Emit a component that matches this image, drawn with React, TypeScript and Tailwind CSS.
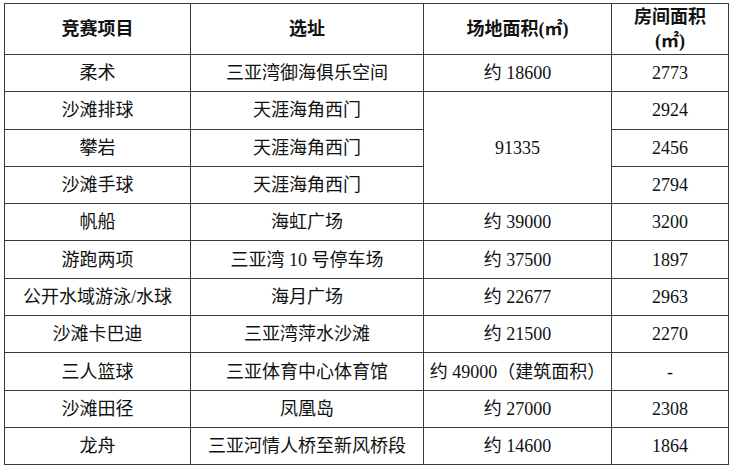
const rows: { name: string; site: string; area?: string; room: string }[] = [
  { name: '柔术', site: '三亚湾御海俱乐空间', area: '约 18600', room: '2773' },
  { name: '沙滩排球', site: '天涯海角西门', area: '91335', room: '2924' },
  { name: '攀岩', site: '天涯海角西门', room: '2456' },
  { name: '沙滩手球', site: '天涯海角西门', room: '2794' },
  { name: '帆船', site: '海虹广场', area: '约 39000', room: '3200' },
  { name: '游跑两项', site: '三亚湾 10 号停车场', area: '约 37500', room: '1897' },
  { name: '公开水域游泳/水球', site: '海月广场', area: '约 22677', room: '2963' },
  { name: '沙滩卡巴迪', site: '三亚湾萍水沙滩', area: '约 21500', room: '2270' },
  { name: '三人篮球', site: '三亚体育中心体育馆', area: '约 49000（建筑面积）', room: '-' },
  { name: '沙滩田径', site: '凤凰岛', area: '约 27000', room: '2308' },
  { name: '龙舟', site: '三亚河情人桥至新风桥段', area: '约 14600', room: '1864' },
];

const cell = 'border border-[#3a3a3a] text-center align-middle p-0';

const App = () => {
  return (
    <div className="w-[731px] h-[465px] bg-white pt-[3px] pl-[4px] font-['Liberation_Serif','Noto_Sans_CJK_SC',serif] text-[18px] leading-[22px] text-[#111]">
      <table className="border-collapse table-fixed w-[724px]">
        <colgroup>
          <col className="w-[186px]" />
          <col className="w-[233px]" />
          <col className="w-[188px]" />
          <col className="w-[117px]" />
        </colgroup>
        <thead>
          <tr className="h-[51px] font-bold">
            <th className={cell}>竞赛项目</th>
            <th className={cell}>选址</th>
            <th className={cell}>场地面积(㎡)</th>
            <th className={`${cell} leading-[24px]`}>
              房间面积
              <br />
              (㎡)
            </th>
          </tr>
        </thead>
        <tbody>
          {rows.map((r, i) => (
            <tr key={i} className="h-[37.3px]">
              <td className={cell}>{r.name}</td>
              <td className={cell}>{r.site}</td>
              {i === 1 && (
                <td className={cell} rowSpan={3}>
                  {r.area}
                </td>
              )}
              {i !== 1 && i !== 2 && i !== 3 && <td className={cell}>{r.area}</td>}
              <td className={cell}>{r.room}</td>
            </tr>
          ))}
        </tbody>
      </table>
    </div>
  );
};

export default App;
